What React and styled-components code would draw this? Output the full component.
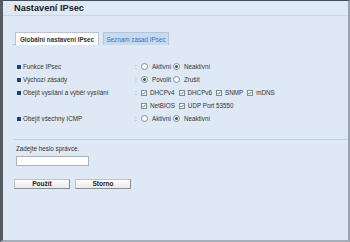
import styled, { createGlobalStyle } from "styled-components";

const GlobalStyle = createGlobalStyle`
  html, body { margin: 0; padding: 0; }
  body { font-family: "Liberation Sans", Arial, sans-serif; }
`;

const Frame = styled.div`
  box-sizing: border-box;
  width: 350px;
  height: 242px;
  background: #dfe9f5;
  border-top: 1px solid #4a4e54;
  border-left: 3px solid #555b63;
  border-right: 2px solid #98a3ae;
  border-bottom: 2px solid #a5afba;
  display: flex;
  flex-direction: column;
  color: #333;
  font-size: 6.3px;
`;

const Title = styled.h1`
  margin: 0;
  height: 14px;
  line-height: 14px;
  padding-left: 11px;
  font-size: 9.2px;
  font-weight: bold;
  color: #222;
  border-bottom: 1px solid #c8d5e4;
`;

const TabBar = styled.div`
  display: flex;
  align-items: flex-end;
  margin-top: 16px;
  padding-left: 10px;
  height: 13px;
`;

const TabLead = styled.span`
  width: 2px;
  border-bottom: 1px solid #b0bac5;
`;

const Tab = styled.div`
  box-sizing: border-box;
  height: 13px;
  width: ${(p) => p.$w}px;
  margin-right: 4px;
  display: flex;
  align-items: center;
  justify-content: center;
  border: 1px solid #b9c4cf;
  border-bottom: none;
  background: ${(p) => (p.$active ? "#ffffff" : "#c6dbf2")};
  color: ${(p) => (p.$active ? "#333" : "#3f6fb5")};
  font-weight: ${(p) => (p.$active ? "bold" : "normal")};
  white-space: nowrap;
`;

const Rows = styled.div`
  margin-top: 15px;
  display: flex;
  flex-direction: column;
`;

const Row = styled.div`
  display: flex;
  align-items: center;
  height: 13px;
  padding-left: 14px;
`;

const Label = styled.div`
  width: 118px;
  display: flex;
  align-items: center;
  gap: 2px;
  white-space: nowrap;
`;

const Bullet = styled.span`
  width: 4px;
  height: 4px;
  background: #1f3f7a;
`;

const Colon = styled.span`
  width: 6px;
  color: #777;
`;

const Options = styled.div`
  display: flex;
  align-items: center;
`;

const Option = styled.label`
  display: flex;
  align-items: center;
  gap: ${(p) => (p.$check ? 3 : 4)}px;
  margin-right: ${(p) => (p.$check ? 4 : 2)}px;
  white-space: nowrap;
`;

const RadioMark = styled.span`
  box-sizing: border-box;
  width: 7px;
  height: 7px;
  border-radius: 50%;
  border: 1px solid #7f8c99;
  background: #fff;
  display: flex;
  align-items: center;
  justify-content: center;
  &::after {
    content: "";
    width: 3px;
    height: 3px;
    border-radius: 50%;
    background: ${(p) => (p.$on ? "#2f6b34" : "transparent")};
  }
`;

const CheckBox = styled.span`
  box-sizing: border-box;
  width: 6px;
  height: 6px;
  border: 1px solid #7f8c99;
  background: #fff;
  display: flex;
  align-items: center;
  justify-content: center;
`;

const Divider = styled.div`
  margin-top: 14px;
  margin-left: 11px;
  border-top: 1px solid #c3d0df;
`;

const Prompt = styled.div`
  margin-top: 5px;
  padding-left: 13px;
  line-height: 8px;
`;

const Input = styled.input`
  box-sizing: border-box;
  margin: 3px 0 0 13px;
  width: 73px;
  height: 10px;
  padding: 0;
  border: 1px solid #a9b3bd;
  background: #fff;
`;

const Buttons = styled.div`
  display: flex;
  gap: 5px;
  margin: 13px 0 0 11px;
`;

const Button = styled.button`
  box-sizing: border-box;
  width: 56px;
  height: 10px;
  padding: 0;
  font-family: inherit;
  font-size: 6.5px;
  font-weight: bold;
  color: #222;
  line-height: 8px;
  background: linear-gradient(#ffffff, #e9e9e9);
  border: 1px solid #c2c2c2;
  border-right-color: #8e8e8e;
  border-bottom-color: #8e8e8e;
`;

function Radio({ on, children }) {
  return (
    <Option>
      <RadioMark $on={on} />
      {children}
    </Option>
  );
}

function Check({ children }) {
  return (
    <Option $check>
      <CheckBox>
        <svg width="4" height="4" viewBox="0 0 4 4">
          <path d="M0.4 2 L1.5 3.2 L3.6 0.6" fill="none" stroke="#2f8a2f" strokeWidth="0.9" />
        </svg>
      </CheckBox>
      {children}
    </Option>
  );
}

export default function App() {
  return (
    <Frame>
      <GlobalStyle />
      <Title>Nastavení IPsec</Title>
      <TabBar>
        <TabLead />
        <Tab $active $w={84}>Globální nastavení IPsec</Tab>
        <Tab $w={66}>Seznam zásad IPsec</Tab>
      </TabBar>
      <Rows>
        <Row>
          <Label><Bullet />Funkce IPsec</Label>
          <Colon>:</Colon>
          <Options>
            <Radio>Aktivní</Radio>
            <Radio on>Neaktivní</Radio>
          </Options>
        </Row>
        <Row>
          <Label><Bullet />Výchozí zásady</Label>
          <Colon>:</Colon>
          <Options>
            <Radio on>Povolit</Radio>
            <Radio>Zrušit</Radio>
          </Options>
        </Row>
        <Row>
          <Label><Bullet />Obejít vysílání a výběr vysílání</Label>
          <Colon>:</Colon>
          <Options>
            <Check>DHCPv4</Check>
            <Check>DHCPv6</Check>
            <Check>SNMP</Check>
            <Check>mDNS</Check>
          </Options>
        </Row>
        <Row>
          <Label />
          <Colon />
          <Options>
            <Check>NetBIOS</Check>
            <Check>UDP Port 53550</Check>
          </Options>
        </Row>
        <Row>
          <Label><Bullet />Obejít všechny ICMP</Label>
          <Colon>:</Colon>
          <Options>
            <Radio>Aktivní</Radio>
            <Radio on>Neaktivní</Radio>
          </Options>
        </Row>
      </Rows>
      <Divider />
      <Prompt>Zadejte heslo správce.</Prompt>
      <Input type="password" />
      <Buttons>
        <Button>Použít</Button>
        <Button>Storno</Button>
      </Buttons>
    </Frame>
  );
}
